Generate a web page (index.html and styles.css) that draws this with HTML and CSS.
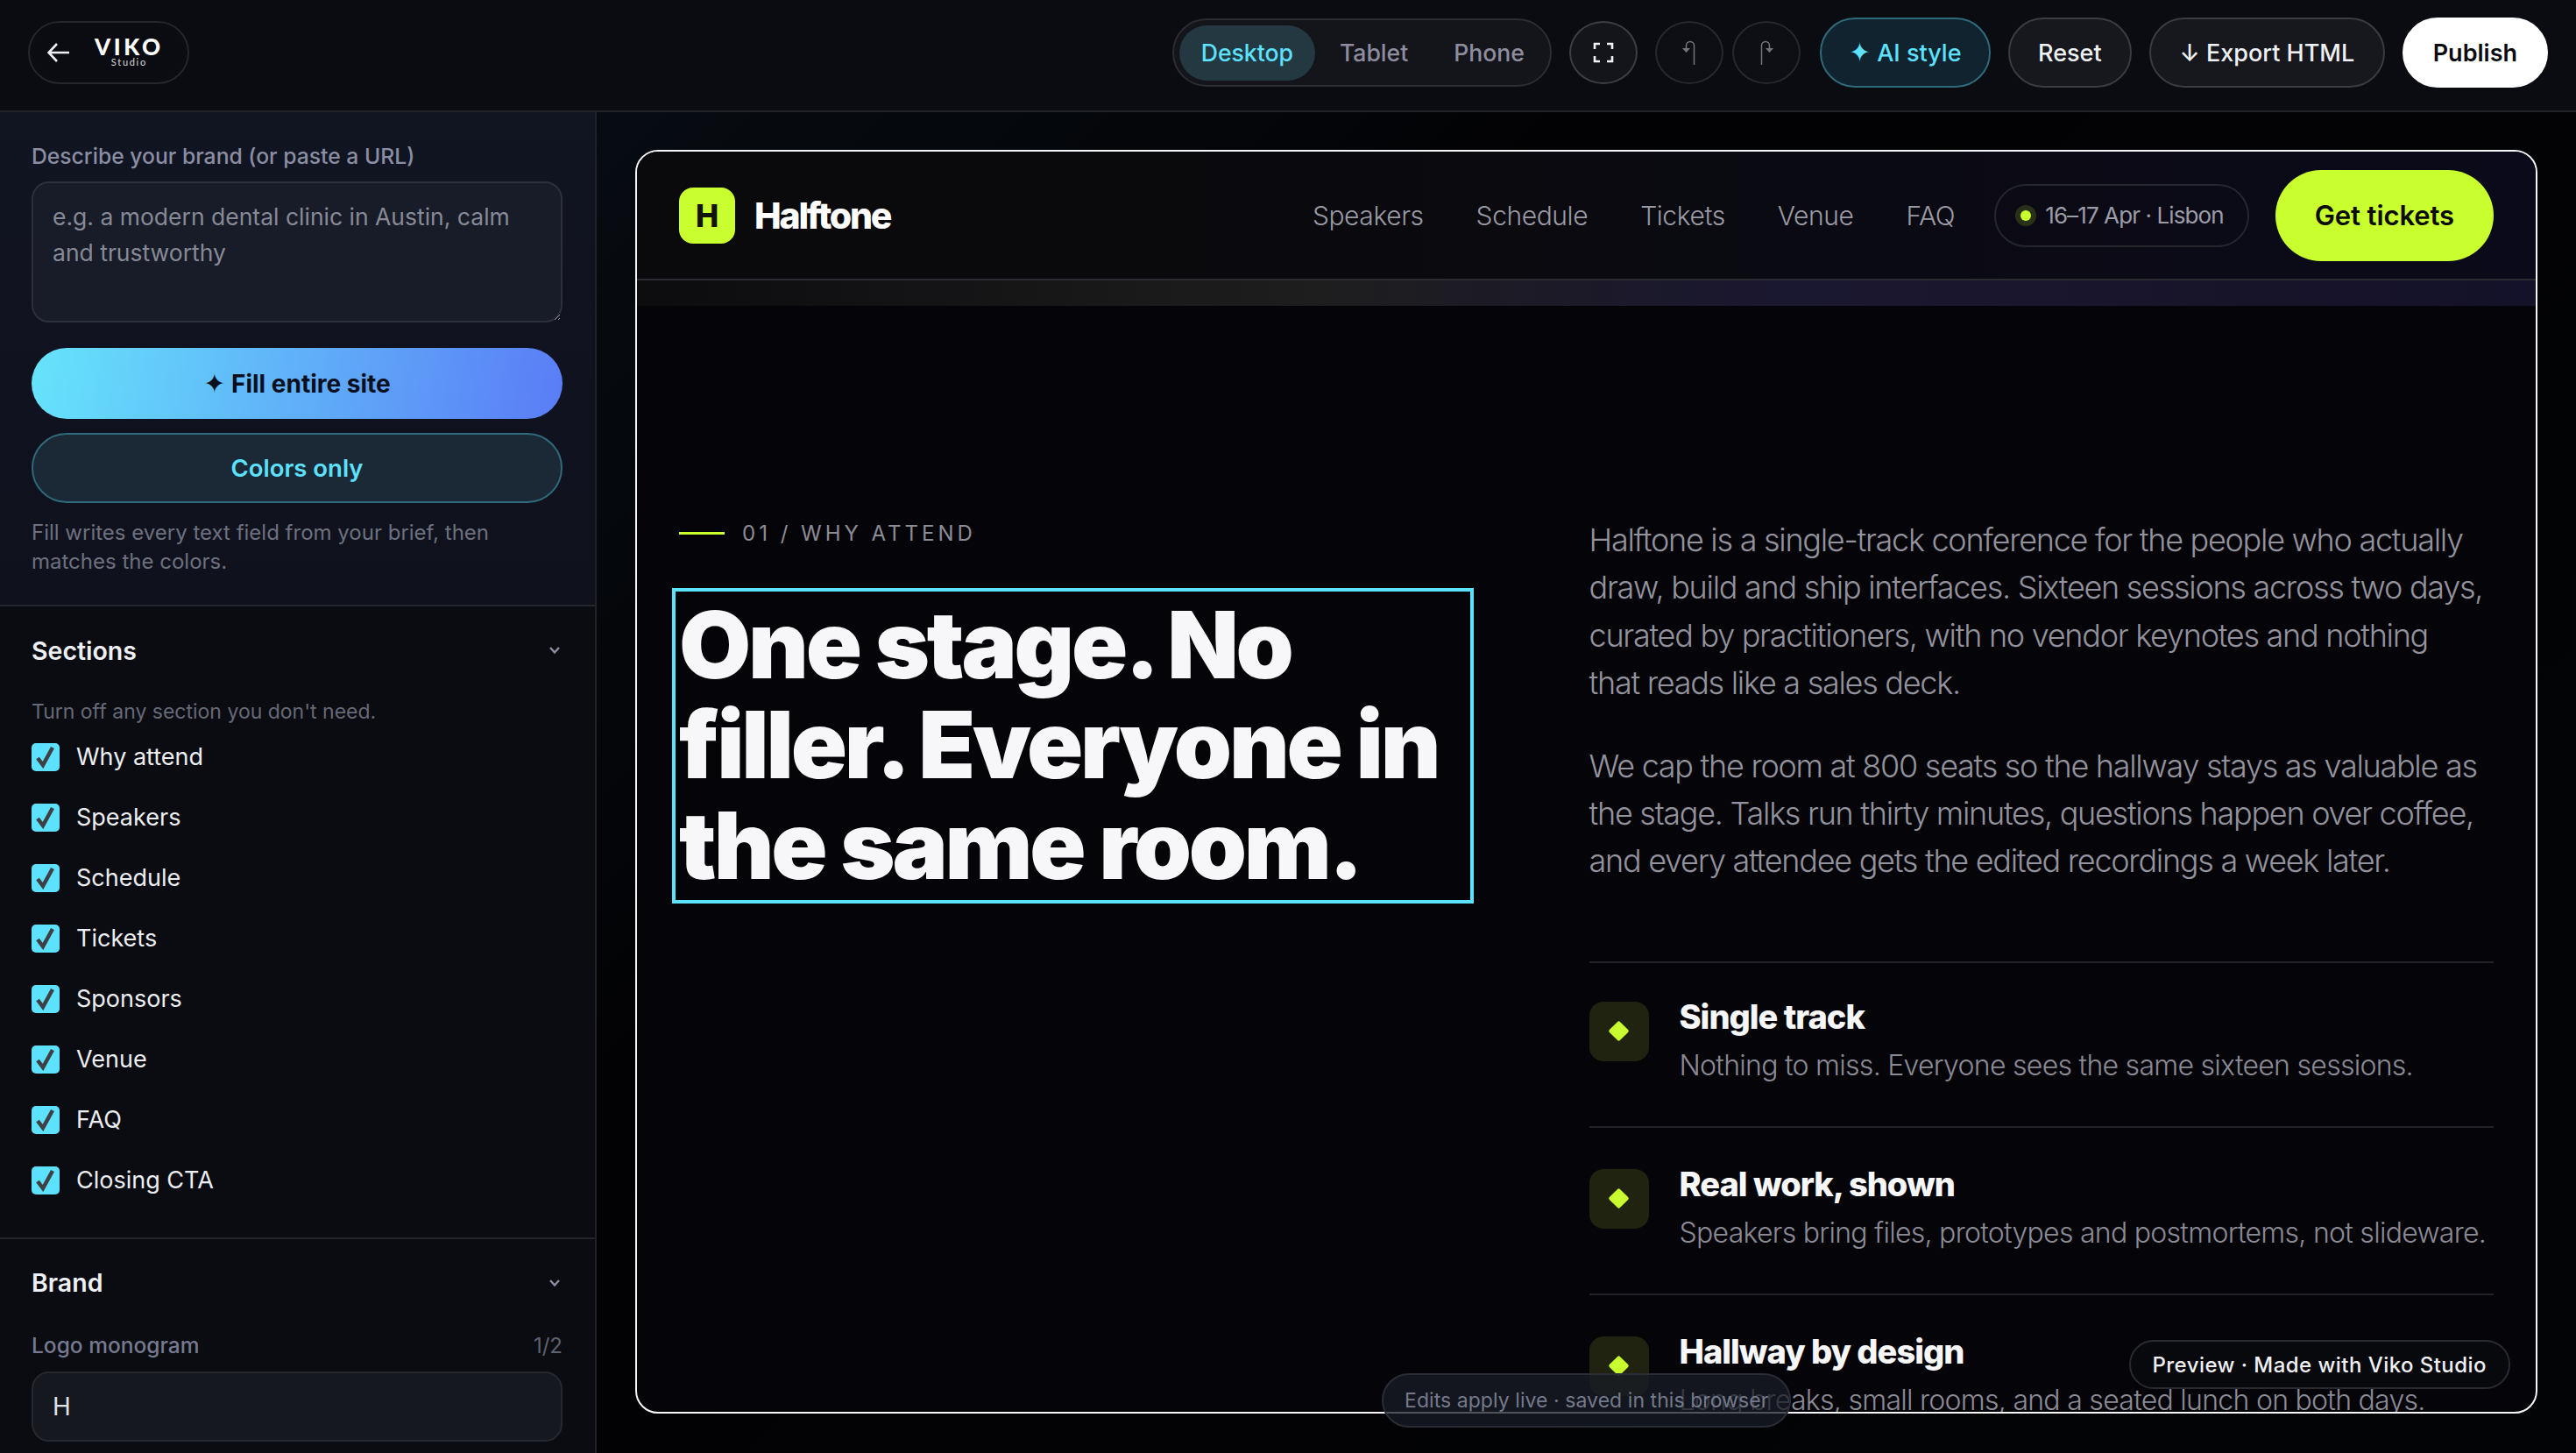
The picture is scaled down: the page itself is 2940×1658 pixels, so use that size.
FILE: index.html
```html
<!DOCTYPE html>
<html lang="en">
<head>
<meta charset="utf-8">
<title>Viko Studio</title>
<link rel="stylesheet" href="styles.css">
</head>
<body>
<div class="app">
  <header class="topbar">
    <a class="back">
      <svg class="back-arrow" width="26" height="24" viewBox="0 0 26 24"><path d="M25 12H2M11 2 1.5 12 11 22" fill="none" stroke="#eceef2" stroke-width="2.6"/></svg>
      <span class="brand"><span class="brand-name">VIKO</span><span class="brand-sub">Studio</span></span>
    </a>
    <div class="spacer"></div>
    <div class="segment">
      <button class="seg active">Desktop</button>
      <button class="seg tablet">Tablet</button>
      <button class="seg">Phone</button>
    </div>
    <button class="round">
      <svg width="24" height="24" viewBox="0 0 24 24"><path d="M2 8V2h6M16 2h6v6M22 16v6h-6M8 22H2v-6" fill="none" stroke="#f0f1f5" stroke-width="2.6"/></svg>
    </button>
    <div class="history">
      <button class="round dim">
        <svg width="20" height="30" viewBox="0 0 20 30"><path d="M15.5 29V7a4.5 4.5 0 0 0-9 0v4" fill="none" stroke="#74767f" stroke-width="1.5"/><path d="M2 10h9l-4.500 5z" fill="#74767f"/></svg>
      </button>
      <button class="round dim">
        <svg width="20" height="30" viewBox="0 0 20 30"><path d="M4.500 29V7a4.500 4.500 0 0 1 9 0v4" fill="none" stroke="#74767f" stroke-width="1.500"/><path d="M9 10h9l-4.500 5z" fill="#74767f"/></svg>
      </button>
    </div>
    <button class="pill ai"><span class="star">✦</span> AI style</button>
    <button class="pill">Reset</button>
    <button class="pill">↓ Export HTML</button>
    <button class="pill publish">Publish</button>
  </header>

  <div class="workspace">
    <aside class="sidebar">
      <section class="ai-panel">
        <label class="field-label">Describe your brand (or paste a URL)</label>
        <textarea class="brief" placeholder="e.g. a modern dental clinic in Austin, calm and trustworthy"></textarea>
        <button class="fill"><span class="star">✦</span> Fill entire site</button>
        <button class="colors">Colors only</button>
        <p class="help">Fill writes every text field from your brief, then matches the colors.</p>
      </section>

      <section class="group">
        <div class="group-head"><h2>Sections</h2><svg class="chev" width="14" height="10" viewBox="0 0 14 10"><path d="M2 2l5 5.500L12 2" fill="none" stroke="#8b8ea3" stroke-width="2.400"/></svg></div>
        <p class="hint">Turn off any section you don't need.</p>
        <ul class="checks">
          <li><span class="box"><svg width="24" height="26" viewBox="0 0 24 26"><path d="M3 14l6 8L20 2" fill="none" stroke="#3f4044" stroke-width="4.500"/></svg></span>Why attend</li>
          <li><span class="box"><svg width="24" height="26" viewBox="0 0 24 26"><path d="M3 14l6 8L20 2" fill="none" stroke="#3f4044" stroke-width="4.500"/></svg></span>Speakers</li>
          <li><span class="box"><svg width="24" height="26" viewBox="0 0 24 26"><path d="M3 14l6 8L20 2" fill="none" stroke="#3f4044" stroke-width="4.500"/></svg></span>Schedule</li>
          <li><span class="box"><svg width="24" height="26" viewBox="0 0 24 26"><path d="M3 14l6 8L20 2" fill="none" stroke="#3f4044" stroke-width="4.500"/></svg></span>Tickets</li>
          <li><span class="box"><svg width="24" height="26" viewBox="0 0 24 26"><path d="M3 14l6 8L20 2" fill="none" stroke="#3f4044" stroke-width="4.500"/></svg></span>Sponsors</li>
          <li><span class="box"><svg width="24" height="26" viewBox="0 0 24 26"><path d="M3 14l6 8L20 2" fill="none" stroke="#3f4044" stroke-width="4.500"/></svg></span>Venue</li>
          <li><span class="box"><svg width="24" height="26" viewBox="0 0 24 26"><path d="M3 14l6 8L20 2" fill="none" stroke="#3f4044" stroke-width="4.500"/></svg></span>FAQ</li>
          <li><span class="box"><svg width="24" height="26" viewBox="0 0 24 26"><path d="M3 14l6 8L20 2" fill="none" stroke="#3f4044" stroke-width="4.500"/></svg></span>Closing CTA</li>
        </ul>
      </section>

      <section class="group brand-group">
        <div class="group-head"><h2>Brand</h2><svg class="chev" width="14" height="10" viewBox="0 0 14 10"><path d="M2 2l5 5.500L12 2" fill="none" stroke="#8b8ea3" stroke-width="2.400"/></svg></div>
        <div class="count-row"><label class="field-label small">Logo monogram</label><span class="count">1/2</span></div>
        <input class="mono" type="text" value="H">
      </section>
    </aside>

    <main class="stage">
      <div class="frame">
        <nav class="site-nav">
          <div class="site-logo"><span class="mark">H</span><span class="site-name">Halftone</span></div>
          <div class="site-links"><a>Speakers</a><a>Schedule</a><a>Tickets</a><a>Venue</a><a>FAQ</a></div>
          <div class="date-pill"><span class="dot"></span>16–17 Apr · Lisbon</div>
          <a class="cta">Get tickets</a>
        </nav>
        <div class="nav-bleed"></div>
        <section class="why">
          <div class="why-left">
            <div class="eyebrow"><span class="rule"></span>01 / WHY ATTEND</div>
            <h1 class="headline">One stage. No filler. Everyone in the same room.</h1>
          </div>
          <div class="why-right">
            <p class="lead">Halftone is a single-track conference for the people who actually draw, build and ship interfaces. Sixteen sessions across two days, curated by practitioners, with no vendor keynotes and nothing that reads like a sales deck.</p>
            <p class="lead">We cap the room at 800 seats so the hallway stays as valuable as the stage. Talks run thirty minutes, questions happen over coffee, and every attendee gets the edited recordings a week later.</p>
            <div class="features">
              <article class="feature"><span class="tile"><i class="diamond"></i></span><div class="feature-text"><h3>Single track</h3><p>Nothing to miss. Everyone sees the same sixteen sessions.</p></div></article>
              <article class="feature"><span class="tile"><i class="diamond"></i></span><div class="feature-text"><h3>Real work, shown</h3><p>Speakers bring files, prototypes and postmortems, not slideware.</p></div></article>
              <article class="feature"><span class="tile"><i class="diamond"></i></span><div class="feature-text"><h3>Hallway by design</h3><p>Long breaks, small rooms, and a seated lunch on both days.</p></div></article>
            </div>
          </div>
        </section>
        <div class="made">Preview · Made with Viko Studio</div>
      </div>
      <div class="toast">Edits apply live · saved in this browser</div>
    </main>
  </div>
</div>
</body>
</html>
```

FILE: styles.css
```css
* { box-sizing: border-box; }
html, body { margin: 0; height: 100%; background: #04060a; overflow: hidden; }
body { font-family: Inter, "Liberation Sans", sans-serif; color: #f0f1f5; }
button { font-family: inherit; cursor: pointer; }
h1, h2, h3, p, ul { margin: 0; padding: 0; }

.app { display: flex; flex-direction: column; height: 1658px; }

/* top bar */
.topbar { flex: none; height: 128px; display: flex; align-items: center; gap: 20px; padding: 0 32px 6px 32px; background: #0a0c11; border-bottom: 2px solid #22242b; }
.spacer { flex: 1; }
.back { width: 184px; height: 72px; display: flex; align-items: center; gap: 28px; padding-left: 20px; border: 2px solid #24262c; border-radius: 36px; }
.back-arrow { flex: none; }
.brand { display: flex; flex-direction: column; align-items: center; }
.brand-name { font-family: Lato, sans-serif; font-weight: 900; font-size: 26px; line-height: 21px; letter-spacing: 3.600px; color: #fff; }
.brand-sub { font-family: Lato, sans-serif; font-size: 11px; line-height: 13px; letter-spacing: 1.700px; color: #d8d8dc; }
.segment { width: 433px; height: 78px; display: flex; align-items: center; padding: 0 6px; background: #13151b; border: 2px solid #2b2d33; border-radius: 39px; }
.seg { flex: none; height: 63px; padding: 0 26px; background: none; border: 0; border-radius: 32px; font-size: 26.600px; font-weight: 500; color: #8d8d9f; }
.seg.tablet { padding-left: 28px; }
.seg.active { width: 155px; padding: 0; background: #243841; color: #5ce1ff; }
.round { width: 78px; height: 72px; display: flex; align-items: center; justify-content: center; padding: 0; background: #13151a; border: 2px solid #3c3e44; border-radius: 50%; }
.round.dim { background: #0d0f14; border-color: #26282e; }
.history { display: flex; gap: 10px; margin-right: 2px; }
.pill { height: 80px; padding: 0 32.500px; background: #16181d; border: 2px solid #3a3c42; border-radius: 40px; font-size: 27px; font-weight: 500; color: #eef0f4; white-space: nowrap; }
.pill.ai { padding: 0 31px; background: #10232e; border-color: #2f6a7b; color: #5ce1ff; }
.pill.publish { padding: 0 33px; background: #fff; border-color: #fff; color: #0a0c11; font-weight: 600; }
.star { font-family: "DejaVu Sans", sans-serif; font-size: 30px; line-height: 1; }

/* sidebar */
.workspace { flex: 1; display: flex; min-height: 0; }
.sidebar { flex: none; width: 681px; background: #0a0c11; border-right: 2px solid #202228; overflow: hidden; }
.ai-panel { height: 564px; padding: 34px 37px 0 36px; background: linear-gradient(180deg, #111421, #0f121d); border-bottom: 2px solid #252730; display: flex; flex-direction: column; }
.field-label { font-size: 24.700px; line-height: 32px; font-weight: 500; color: #8b8ea3; }
.field-label.small { font-size: 24.500px; color: #767a90; }
.brief { display: block; width: 606px; height: 161px; margin-top: 13px; padding: 18px 22px; background: #181c28; border: 2px solid #2d303b; border-radius: 20px; font: 400 26.500px/41px Inter, sans-serif; color: #ddd; outline: 0; color-scheme: dark; }
.brief::placeholder { color: #878a96; opacity: 1; }
.fill { height: 81px; margin-top: 29px; background: linear-gradient(100deg, #66e4fb, #5a7cf6); border: 0; border-radius: 41px; font-size: 28px; font-weight: 700; color: #0a0f1e; }
.colors { height: 80px; margin-top: 16px; background: #1b2836; border: 2px solid #2f6a7b; border-radius: 40px; font-size: 27.500px; font-weight: 600; color: #5ce1ff; }
.help { margin-top: 17px; font-size: 24px; line-height: 33px; color: #6d707e; }

.group { padding: 0 37px 0 36px; }
.group-head { display: flex; justify-content: space-between; align-items: center; height: 100px; }
.group-head h2 { font-size: 28.500px; font-weight: 600; color: #eff0f5; }
.chev { margin-right: 2px; }
.hint { font-size: 23px; line-height: 32px; margin-top: 4px; color: #666977; }
.checks { list-style: none; margin-top: 20px; }
.checks li { height: 69px; display: flex; align-items: flex-start; gap: 19px; font-size: 27px; line-height: 32px; color: #eceef2; }
.box { flex: none; width: 32px; height: 32px; display: flex; align-items: center; justify-content: center; background: #5ce1ff; border-radius: 5px; }
.brand-group { margin-top: 12px; border-top: 2px solid #22242b; }
.brand-group .group-head { height: 99px; }
.count-row { display: flex; justify-content: space-between; align-items: center; margin-top: 6px; }
.count { font-size: 24px; color: #5e6170; }
.mono { display: block; width: 606px; height: 80px; margin-top: 14px; padding: 0 22px; background: #16181f; border: 2px solid #26282f; border-radius: 20px; font: 400 28px Inter, sans-serif; color: #dfe1e6; outline: 0; }

/* stage */
.stage { position: relative; flex: 1; min-width: 0; padding: 43px 44px 45px; background: linear-gradient(135deg, #070c12, #020204 30%, #030406); }
.frame { position: relative; height: 100%; overflow: hidden; background: #050509; border: 2px solid #f5f6f8; border-radius: 26px; }
.site-nav { height: 147px; display: flex; align-items: center; padding: 0 48px; background: linear-gradient(90deg, #0a0a0c, #0a0a0e 40%, #0b0a1a); border-bottom: 2px solid #2a2a31; }
.site-logo { display: flex; align-items: center; gap: 22px; }
.mark { width: 64px; height: 64px; display: flex; align-items: center; justify-content: center; background: #c9ff2e; border-radius: 16px; color: #101408; font-size: 35px; font-weight: 800; }
.site-name { font-size: 41px; font-weight: 800; letter-spacing: -2.200px; color: #fff; }
.site-links { margin-left: auto; display: flex; gap: 60px; font-size: 30px; font-weight: 300; letter-spacing: -.42px; color: #9a9aa5; }
.date-pill { height: 72px; margin-left: 45px; padding: 0 27px 0 28px; display: flex; align-items: center; gap: 16px; border: 2px solid #25252e; border-radius: 36px; font-size: 26px; font-weight: 400; letter-spacing: -.9px; color: #9c9ca8; }
.dot { width: 12px; height: 12px; background: #c9ff2e; border-radius: 50%; box-shadow: 0 0 0 6px rgba(201,255,46,.16); }
.cta { height: 104px; margin-left: 30px; padding: 0 45px; display: flex; align-items: center; background: #c9ff2e; border-radius: 52px; font-size: 31px; font-weight: 600; letter-spacing: -.1px; color: #0a0c05; }
.nav-bleed { height: 29px; background: linear-gradient(90deg, #0c0c0e, #1e1e1f 36%, #1a1730 60%, #17142a 85%, #14122a); }

.why { display: grid; grid-template-columns: 899fr 1033fr; column-gap: 140px; padding: 242px 48px 0; }
.eyebrow { display: flex; align-items: center; gap: 20px; height: 34px; font-size: 24px; letter-spacing: 4px; color: #8c8c96; }
.rule { width: 52px; height: 3px; background: #c9ff2e; }
.headline { margin: 50px -4px 0; padding: 4px 4px 5px; outline: 4px solid #5ce1ff; font-size: 106px; line-height: 114.400px; font-weight: 900; letter-spacing: -3.200px; color: #f7f7f9; }
.why-right { margin-top: -2px; }
.lead { max-width: 1022px; font-size: 36px; line-height: 54.400px; font-weight: 300; letter-spacing: -1.280px; color: #93939e; }
.lead + .lead { margin-top: 40px; }
.features { margin-top: 87px; }
.feature { height: 191px; display: flex; gap: 35px; padding-top: 47px; border-top: 2px solid #22222b; }
.feature:first-child { height: 188px; padding-top: 44px; }
.tile { flex: none; width: 68px; height: 68px; display: flex; align-items: center; justify-content: center; background: #20230f; border-radius: 16px; }
.diamond { width: 17px; height: 17px; background: #c9ff2e; border-radius: 2px; transform: rotate(45deg); }
.feature-text { margin-top: -6px; }
.feature h3 { font-size: 38px; line-height: 46px; font-weight: 800; letter-spacing: -1px; color: #f7f7f9; }
.feature p { margin-top: 9px; font-size: 32px; line-height: 48px; font-weight: 300; letter-spacing: -.72px; color: #8b8b96; }
.made { position: absolute; right: 29px; bottom: 26px; height: 56px; padding: 0 25px; display: flex; align-items: center; background: #08090d; border: 2px solid #2a2a33; border-radius: 28px; font-size: 24px; font-weight: 500; letter-spacing: .45px; color: #f0f0f4; }
.toast { position: absolute; left: 896px; bottom: 29px; height: 62px; padding: 0 24px; display: flex; align-items: center; background: rgba(24,28,38,.75); border: 2px solid #2a2d36; border-radius: 31px; font-size: 23px; letter-spacing: .06px; color: #747a8c; }
```
